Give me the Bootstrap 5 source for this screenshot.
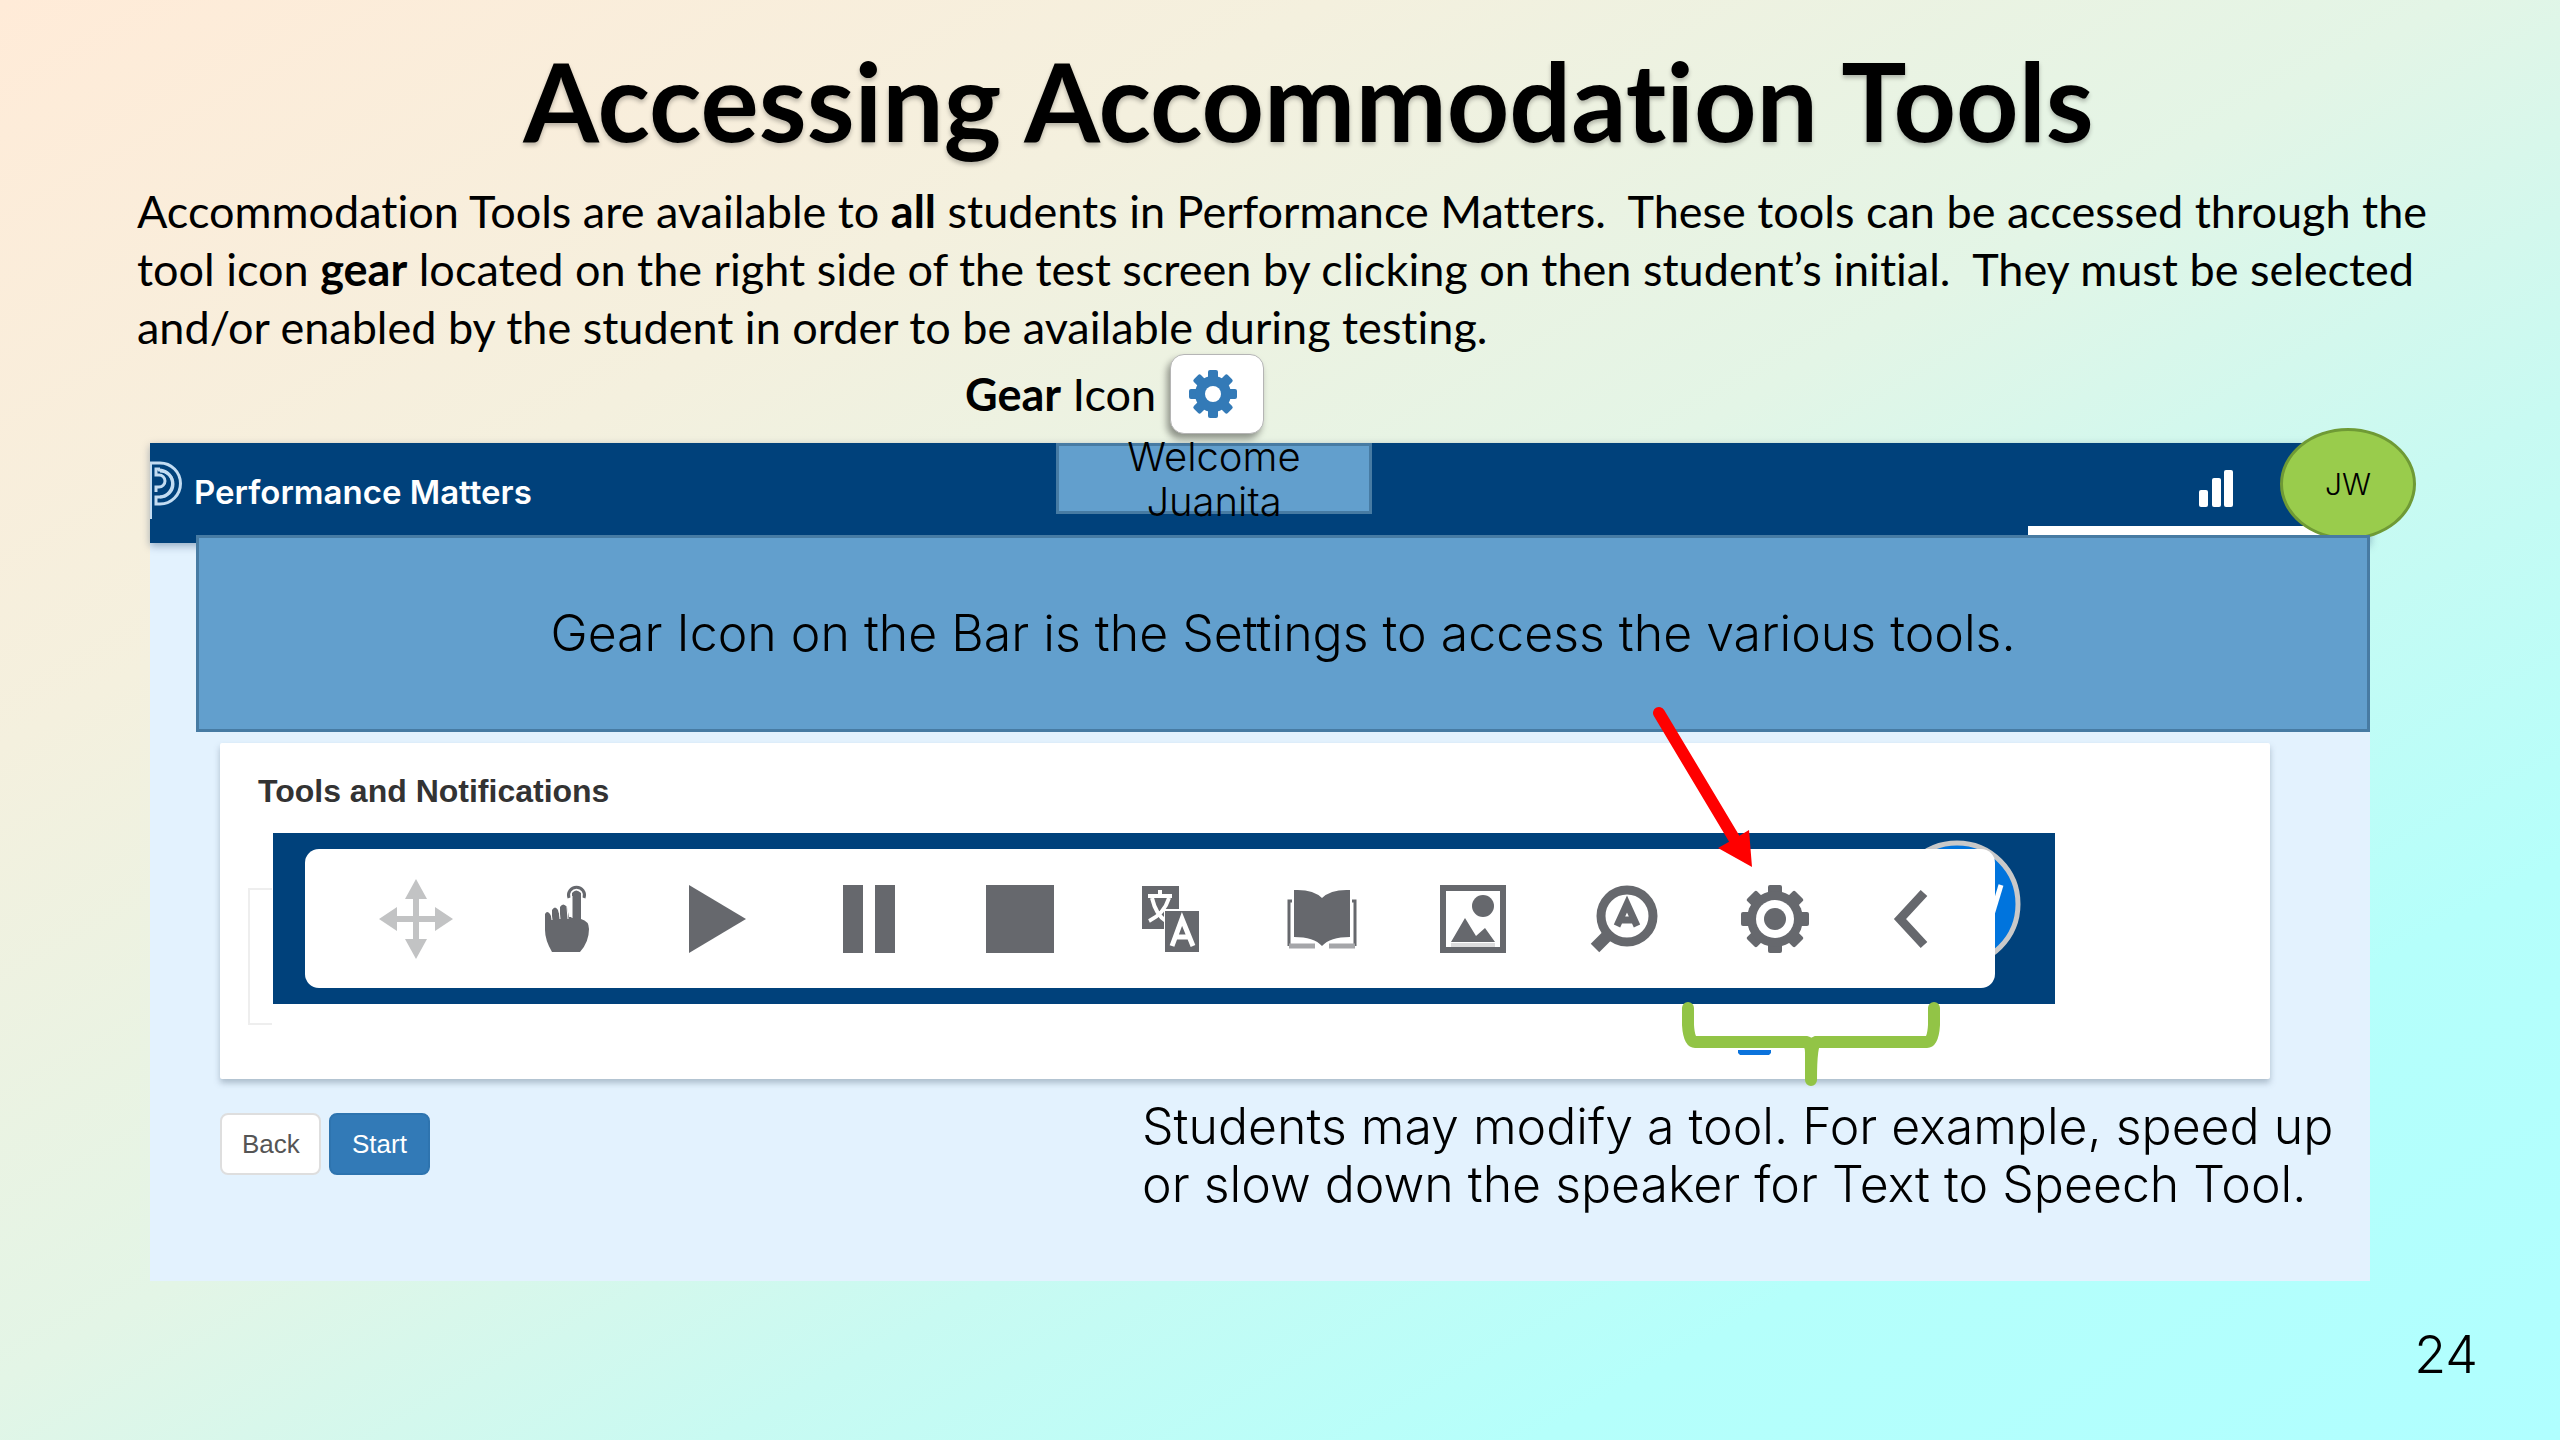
<!DOCTYPE html>
<html lang="en">
<head>
<meta charset="utf-8">
<meta name="viewport" content="width=device-width, initial-scale=1">
<title>Accessing Accommodation Tools</title>
<link href="https://cdn.jsdelivr.net/npm/bootstrap@5.3.0/dist/css/bootstrap.min.css" rel="stylesheet">
<style>
  body { font-family: Lato, "Liberation Sans", sans-serif; font-variant-ligatures: none; color: #000; background: #e2f5e6; }
  .slide { background: linear-gradient(to bottom right, #ffebd8 0%, #f4f0de 26%, #e3f5e6 48%, #c8faf2 64%, #b5fffb 80%, #b0ffff 100%); padding: 30px 82px 32px 137px; }
  .slide-title { font-size: 109px; line-height: 140px; font-weight: 700; padding-left: 18px; padding-right: 16px; text-shadow: 0 3px 4px rgba(0,0,0,.25); }
  .intro { font-size: 45px; line-height: 58px; padding-top: 12px; }
  .gear-row { font-size: 45px; line-height: 80px; gap: 14px; padding-left: 828px; margin-top: -2px; }
  .gear-tile { width: 94px; height: 80px; padding-right: 8px; border: 1px solid #b5b5b5; border-radius: 14px; background: #fff; box-shadow: -3px 5px 7px rgba(0,0,0,.4); position: relative; z-index: 3; }
  .app { margin: 9px 108px 0 13px; background: #e3f2fe; min-height: 838px; }
  .app-bar { background: #00417b; height: 100px; padding: 0; box-shadow: 0 3px 8px rgba(0,40,90,.35); }
  .brand-name { font-family: Inter, sans-serif; font-size: 33px; line-height: 48px; font-weight: 600; color: #fff; padding-top: 17px; }
  .shape { background: #629fcd; border: 3px solid #477ba3; }
  .round-face { font-family: Inter, sans-serif; font-weight: 300; }
  .welcome { left: 906px; top: 0; width: 316px; height: 71px; font-size: 40px; line-height: 45px; }
  .avatar { right: -46px; top: -15px; width: 136px; height: 112px; border-radius: 50%; background: #99cc4c; border: 3px solid #6f9a35; font-size: 30px; }
  .tab-line { right: 0; bottom: 0; width: 342px; height: 17px; background: #fff; }
  .signal { right: 135px; top: 27px; }
  .banner { margin-left: 46px; margin-top: -8px; height: 197px; font-size: 50px; position: relative; z-index: 1; }
  .tools-card { margin: 11px 100px 0 70px; height: 336px; border: 0; border-radius: 2px; background: #fff; box-shadow: 0 4px 6px rgba(70,90,110,.35); padding: 28px 0 0 38px; }
  .tools-card h2 { font-family: "Liberation Sans", sans-serif; font-size: 32px; line-height: 40px; font-weight: 700; color: #333; margin: 0; }
  .strip { margin: 22px 215px 0 15px; height: 171px; background: #00417b; padding: 16px 60px 16px 32px; position: relative; z-index: 2; }
  .ghost-frame { left: -25px; top: 55px; width: 24px; height: 137px; border: 2px solid #eee; border-right: 0; }
  .toolbar { height: 139px; border-radius: 14px; background: #fff; padding: 0 24px 0 35px; position: relative; }
  .toolbar button { flex: 151 1 0; border: 0; background: none; padding: 0; color: #66686d; }
  .toolbar button:last-child { flex-grow: 120; }
  .toolbar svg { display: block; margin: auto; }
  .user-ring { right: 34px; top: 7px; }
  .arrow { right: 285px; top: -133px; }
  .brace { right: 113px; top: 168px; }
  .actions { padding: 18px 20px 0 70px; }
  .actions .btn { font-family: "Liberation Sans", sans-serif; font-size: 26px; line-height: 38px; padding: 10px 20px; border-radius: 8px; width: 101px; border-width: 2px; }
  .btn-back { background: #fff; border-color: #dedede; color: #555; }
  .btn-start { background: #327ab7; border-color: #2e74af; color: #fff; }
  .note { font-size: 50px; line-height: 58px; width: 1208px; }
  .page-no { font-size: 52px; line-height: 64px; margin-top: 42px; }
</style>
</head>
<body>
<main class="slide min-vh-100 overflow-hidden">
  <h1 class="slide-title text-center m-0">Accessing Accommodation Tools</h1>
  <p class="intro m-0 text-nowrap">Accommodation Tools are available to <b>all</b> students in Performance Matters.&nbsp; These tools can be accessed through the<br>tool icon <b>gear</b> located on the right side of the test screen by clicking on then student’s initial.&nbsp; They must be selected<br>and/or enabled by the student in order to be available during testing.</p>
  <div class="gear-row d-flex align-items-center">
    <span><b>Gear</b> Icon</span>
    <span class="gear-tile d-flex align-items-center justify-content-center">
      <svg width="48" height="48" viewBox="-24 -24 48 48" fill="#337ab7"><rect x="-5" y="-24" width="10" height="48" rx="2"/><rect x="-5" y="-24" width="10" height="48" rx="2" transform="rotate(45)"/><rect x="-5" y="-24" width="10" height="48" rx="2" transform="rotate(90)"/><rect x="-5" y="-24" width="10" height="48" rx="2" transform="rotate(135)"/><circle r="18"/><circle r="8" fill="#fff"/></svg>
    </span>
  </div>

  <section class="app">
    <header class="app-bar navbar position-relative align-items-start">
      <a href="#" class="d-flex text-decoration-none">
        <svg width="44" height="80" viewBox="0 0 44 80" fill="none" stroke="#c3dcf2" stroke-width="3"><path d="M0 20H10A20 20 0 0 1 10 61H6V54H10A13 13 0 0 0 10 28M6 49V44H9A6 6 0 0 0 9 32H6V26H10"/><path d="M1 20V76" stroke-width="2"/><path d="M8 27A13.500 13.500 0 0 1 10 54"/></svg>
        <span class="brand-name align-self-center">Performance Matters</span>
      </a>
      <div class="welcome shape round-face position-absolute d-flex align-items-center justify-content-center text-center">Welcome<br>Juanita</div>
      <svg class="signal position-absolute" width="36" height="38" fill="#fff"><rect y="20" width="9" height="17" rx="2"/><rect x="13" y="8" width="9" height="29" rx="2"/><rect x="25" width="9" height="37" rx="2"/></svg>
      <div class="tab-line position-absolute"></div>
      <div class="avatar round-face position-absolute d-flex align-items-center justify-content-center">JW</div>
    </header>
    <div class="banner shape round-face d-flex align-items-center justify-content-center">Gear Icon on the Bar is the Settings to access the various tools.</div>

    <div class="tools-card card">
      <h2>Tools and Notifications</h2>
      <div class="strip">
        <div class="ghost-frame position-absolute"></div>
        <svg class="user-ring position-absolute" width="128" height="128" viewBox="0 0 128 128"><circle cx="64" cy="64" r="61" fill="#0074dd" stroke="#c9c9c9" stroke-width="5"/><path d="M98 78L108 45" stroke="#fff" stroke-width="5"/></svg>
        <div class="toolbar d-flex align-items-center">
          <button type="button" aria-label="Move"><svg width="74" height="80" viewBox="0 0 74 80" fill="#c2c3c4"><path d="M37 0L48 20H40V37H56V28L74 40L56 52V43H40V60H48L37 80L26 60H34V43H18V52L0 40L18 28V37H34V20H26Z"/></svg></button>
          <button type="button" aria-label="Touch"><svg width="46" height="68" viewBox="0 0 46 68" fill="currentColor"><path d="M8 67Q1 55 1 45V29Q3 25 6 29L8 33V25Q11 20 14 25L16 32V22Q19 17 23 22L25 32H28V8Q32 3 37 8V34Q45 36 45 44Q45 57 36 67Z"/><path d="M25 13A8 8 0 1 1 40 13" fill="none" stroke="currentColor" stroke-width="3"/><path d="M7 27L8 35M15 24L16 34M23 22L24 34M28 11V33" stroke="#fff" stroke-width="1"/></svg></button>
          <button type="button" aria-label="Play"><svg width="58" height="68" fill="currentColor"><path d="M0 0L57 34L0 68Z"/></svg></button>
          <button type="button" aria-label="Pause"><svg width="54" height="68" fill="currentColor"><path d="M1 0H21V68H1ZM33 0H53V68H33Z"/></svg></button>
          <button type="button" aria-label="Stop"><svg width="68" height="68" fill="currentColor"><path d="M0 0H68V68H0Z"/></svg></button>
          <button type="button" aria-label="Translate"><svg width="58" height="68" viewBox="0 0 58 68" fill="currentColor"><path d="M0 1H37V24H22V44H0Z"/><path d="M6 11H30M18 5V11M10 13Q14 30 24 36M27 13Q22 29 7 36" fill="none" stroke="#fff" stroke-width="4"/><path d="M23 26H57V67H23Z"/><path d="M30 61L40 34L51 61M33 52H47" fill="none" stroke="#fff" stroke-width="5"/></svg></button>
          <button type="button" aria-label="Dictionary"><svg width="70" height="62" viewBox="0 0 70 62" fill="currentColor"><path d="M7 2Q26 1 35 10Q44 1 63 2V49Q43 49 35 58Q27 49 7 49Z"/><path d="M5 13H2V58M65 13H68V58" fill="none" stroke="currentColor" stroke-width="3"/><path d="M2 58H28M42 58H68" stroke="#a5a6a9" stroke-width="5"/></svg></button>
          <button type="button" aria-label="Picture"><svg width="66" height="68" viewBox="0 0 66 68" fill="currentColor"><path d="M3 3H63V65H3Z" fill="none" stroke="currentColor" stroke-width="6"/><circle cx="43" cy="21" r="11"/><path d="M11 57L25 33L36 51L45 43L55 57Z"/><path d="M11 60H55" stroke="#dcdcdd" stroke-width="4"/></svg></button>
          <button type="button" aria-label="Magnify text"><svg width="68" height="68" viewBox="0 0 68 68" fill="none" stroke="currentColor"><circle cx="37" cy="31" r="26" stroke-width="9"/><path d="M20 48L5 63" stroke-width="12"/><path d="M27 41L37 19L47 41M30 35H44" stroke-width="7"/></svg></button>
          <button type="button" aria-label="Settings"><svg width="70" height="70" viewBox="-35 -35 70 70" fill="currentColor"><rect x="-7" y="-34" width="14" height="68" rx="2"/><rect x="-7" y="-34" width="14" height="68" rx="2" transform="rotate(45)"/><rect x="-7" y="-34" width="14" height="68" rx="2" transform="rotate(90)"/><rect x="-7" y="-34" width="14" height="68" rx="2" transform="rotate(135)"/><circle r="28"/><circle r="19" fill="#fff"/><circle r="11"/></svg></button>
          <button type="button" aria-label="Collapse"><svg width="36" height="60" viewBox="0 0 36 60" fill="none" stroke="currentColor" stroke-width="9"><path d="M31 4L7 30L31 56"/></svg></button>
        </div>
        <svg class="arrow position-absolute" width="130" height="170" viewBox="0 0 130 170"><path d="M19 13L98 145" stroke="#f00" stroke-width="12" stroke-linecap="round"/><path d="M112 167L78 148L94 139L109 130Z" fill="#f00"/></svg>
        <svg class="brace position-absolute" width="262" height="86" viewBox="0 0 262 86"><path d="M58 49H91V52L89 54H60L58 52Z" fill="#0b73dc"/><path d="M8 7V24Q9 41 15 41H126Q131 42 131 52V79Q131 42 136 41H247Q253 41 254 24V7" fill="none" stroke="#92c446" stroke-width="12" stroke-linecap="round" stroke-linejoin="round"/></svg>
      </div>
    </div>

    <div class="actions d-flex justify-content-between align-items-start">
      <div class="d-flex pt-3 gap-2">
        <button type="button" class="btn btn-back">Back</button>
        <button type="button" class="btn btn-start">Start</button>
      </div>
      <p class="note round-face m-0 text-nowrap">Students may modify a tool. For example, speed up<br>or slow down the speaker for Text to Speech Tool.</p>
    </div>
  </section>
  <div class="page-no round-face text-end">24</div>
</main>
<script src="https://cdn.jsdelivr.net/npm/bootstrap@5.3.0/dist/js/bootstrap.bundle.min.js"></script>
</body>
</html>
